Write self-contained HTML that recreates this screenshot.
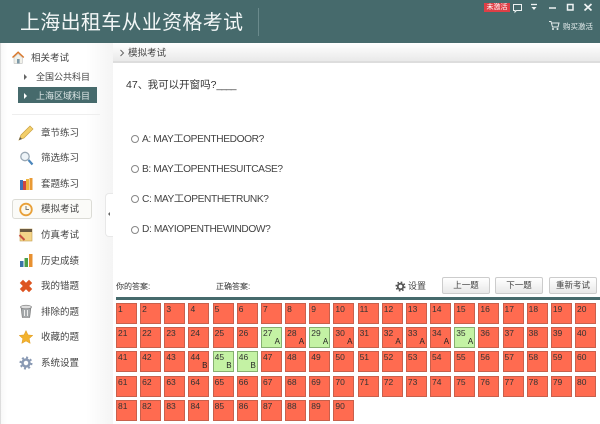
<!DOCTYPE html>
<html lang="zh"><head><meta charset="utf-8"><style>
*{box-sizing:border-box}
html,body{margin:0;padding:0;background:#fff}
body{width:600px;height:424px;overflow:hidden;position:relative;font-family:"Liberation Sans","Noto Sans CJK SC",sans-serif;color:#333}
#w{position:absolute;left:0;top:0;width:600px;height:424px;overflow:hidden;filter:blur(.3px)}
.a{position:absolute;white-space:nowrap}
#hd{left:0;top:0;width:600px;height:43px;background:#466a6c}
#title{left:20px;top:10px;font-size:20px;line-height:27px;color:#f2f6f6;letter-spacing:.3px}
#side{left:0;top:43px;width:113px;height:381px;background:linear-gradient(90deg,#f8f8f8 0,#fff 6px,#fff 85px,#f4f4f4 113px);border-left:1px solid #ddd}
#bar{left:113px;top:43px;width:487px;height:20px;background:linear-gradient(#fff,#e9e9e9);border-bottom:2px solid #ddd}
.m{left:41px;font-size:9.5px;line-height:14px;color:#444}
.ic{position:absolute;left:16px;width:20px;height:20px}
.op{left:142px;font-size:10.2px;letter-spacing:-.4px;line-height:14px;color:#444}
.r{position:absolute;left:131px;width:8px;height:8px;border:1px solid #888;border-radius:50%;background:#fff}
.btn{position:absolute;top:277px;height:17px;border:1px solid #ccc;border-radius:2px;background:linear-gradient(#fff,#e8e8e8);font-size:8.5px;line-height:15px;text-align:center;color:#444}
#grid{position:absolute;left:116px;top:303px;display:grid;grid-template-columns:repeat(20,21px);grid-auto-rows:21px;column-gap:3.16px;row-gap:3.2px}
#grid div{position:relative;background:#ff6b50;border:1px solid #c8604c;font-size:8.5px;line-height:11px;padding:0 0 0 1px;color:#333}
#grid div.g{background:#c4f2a4;border-color:#86b070}
#grid b{position:absolute;right:1px;bottom:1px;font-weight:400;font-size:8px;line-height:9px;color:#222}
</style></head><body><div id="w">
<div class="a" id="hd"></div>
<div class="a" id="title">上海出租车从业资格考试</div>
<div class="a" style="left:258px;top:8px;width:1px;height:28px;background:#6a8a8c"></div>
<div class="a" style="left:484px;top:3px;width:26px;height:9px;background:#de3f46;color:#fff;font-size:7px;line-height:9px;text-align:center">未激活</div>
<svg class="a" style="left:510px;top:0;width:90px;height:34px" viewBox="0 0 90 34" fill="none" stroke="#eef3f3">
<path d="M3.500 4.500h8v6h-5l-1.500 1.500v-1.500h-1.500z"/>
<path d="M21 4.500h6" stroke-width="1.300"/><path d="M21.500 7h5l-2.500 3z" fill="#eef3f3" stroke="none"/>
<path d="M39 8h7" stroke-width="1.500"/>
<rect x="57.500" y="4.500" width="5.500" height="5.500" stroke-width="1.500"/>
<path d="M74.500 4l7 6.500M81.500 4l-7 6.500" stroke-width="1.700"/>
<path d="M39 21.500h2l1.500 5.500h5.500l1-4h-7" stroke="#e6eeee"/><circle cx="43" cy="29" r="1" fill="#e6eeee" stroke="none"/><circle cx="47.500" cy="29" r="1" fill="#e6eeee" stroke="none"/>
</svg>
<div class="a" style="left:563px;top:21px;font-size:7.500px;line-height:11px;color:#e6eeee">购买激活</div>

<div class="a" id="side"></div>
<svg class="a" style="left:11px;top:50px;width:15px;height:15px" viewBox="0 0 20 20"><path d="M2 10L9.500 3l7.500 7" fill="none" stroke="#d9772a" stroke-width="2"/><path d="M4 10l5.500-5 5.500 5v8H4z" fill="#f1f1ea" stroke="#aaa" stroke-width=".6"/><rect x="8" y="12" width="3.500" height="6" fill="#7d99a8"/></svg>
<div class="a" style="left:31px;top:52px;font-size:9.500px;line-height:14px;color:#444">相关考试</div>
<div class="a" style="left:24px;top:74px;width:0;height:0;border-left:3px solid #666;border-top:3px solid transparent;border-bottom:3px solid transparent"></div>
<div class="a" style="left:36px;top:71px;font-size:9px;line-height:13px;color:#444">全国公共科目</div>
<div class="a" style="left:18px;top:87px;width:79px;height:16px;background:#466a6c"></div>
<div class="a" style="left:24px;top:93px;width:0;height:0;border-left:3px solid #fff;border-top:3px solid transparent;border-bottom:3px solid transparent"></div>
<div class="a" style="left:36px;top:90px;font-size:9px;line-height:13px;color:#dfe8e8">上海区域科目</div>
<div class="a" style="left:12px;top:114px;width:88px;height:1px;background:#eee"></div>

<div class="a" style="left:12px;top:199px;width:80px;height:20px;border:1px solid #dcdcd6;border-radius:3px;background:#fbfbf8"></div>

<svg class="ic" style="top:123px" viewBox="0 0 20 20"><path d="M3 17l2-5L14 3l3 3-9 9z" fill="#f3cf6a" stroke="#c9a040" stroke-width=".7"/><path d="M3 17l1-3 2 2z" fill="#555"/></svg>
<div class="a m" style="top:127px">章节练习</div>
<svg class="ic" style="top:148px" viewBox="0 0 20 20"><circle cx="9" cy="8.500" r="4.200" fill="#eef4f8" stroke="#9aa8b4" stroke-width="1.300"/><path d="M12.500 12l4 4.500" stroke="#4b86bb" stroke-width="2.200"/></svg>
<div class="a m" style="top:152px">筛选练习</div>
<svg class="ic" style="top:173px" viewBox="0 0 20 20"><rect x="4" y="7" width="3" height="10" fill="#3f72b8"/><rect x="7" y="8" width="3" height="9" fill="#d0483f"/><rect x="10" y="6" width="3" height="11" fill="#eeb63e"/><rect x="13.500" y="5" width="3" height="12" fill="#e99a35"/></svg>
<div class="a m" style="top:178px">套题练习</div>
<svg class="ic" style="top:199px" viewBox="0 0 20 20"><circle cx="10" cy="10.500" r="5.800" fill="#fdf8ea" stroke="#e8a038" stroke-width="1.800"/><path d="M10 7v3.500h3" fill="none" stroke="#777" stroke-width="1"/></svg>
<div class="a m" style="top:203px">模拟考试</div>
<svg class="ic" style="top:225px" viewBox="0 0 20 20"><rect x="4" y="4" width="12" height="12" fill="#f4d488" stroke="#c4a050" stroke-width=".6"/><rect x="4" y="4" width="12" height="3" fill="#6b5a40"/><path d="M3.500 10l5 5" stroke="#c9503f" stroke-width="2"/></svg>
<div class="a m" style="top:229px">仿真考试</div>
<svg class="ic" style="top:250px" viewBox="0 0 20 20"><rect x="4" y="11" width="3.500" height="6" fill="#3a74a8"/><rect x="8.500" y="8" width="3.500" height="9" fill="#4aa04a"/><rect x="13" y="4" width="3.500" height="13" fill="#e89030"/></svg>
<div class="a m" style="top:255px">历史成绩</div>
<svg class="ic" style="top:276px" viewBox="0 0 20 20"><path d="M4.500 7l2.500-2.500 3 3 3-3 2.500 2.500-3 3 3 3-2.500 2.500-3-3-3 3-2.500-2.500 3-3z" fill="#dd5420" stroke="#dd5420" stroke-width="1"/></svg>
<div class="a m" style="top:280px">我的错题</div>
<svg class="ic" style="top:301px" viewBox="0 0 20 20"><path d="M5 6h10l-1.300 10.500h-7.400z" fill="#a4a8aa" stroke="#777" stroke-width=".6"/><ellipse cx="10" cy="6" rx="5.500" ry="1.800" fill="#ddd" stroke="#777" stroke-width=".6"/><path d="M8.500 9v6M11.500 9v6" stroke="#eee"/></svg>
<div class="a m" style="top:306px">排除的题</div>
<svg class="ic" style="top:327px" viewBox="0 0 20 20"><path d="M10 3.500l2 4.400 4.800.5-3.600 3.200 1 4.800-4.200-2.400-4.200 2.400 1-4.800-3.600-3.200 4.800-.5z" fill="#f2b22e" stroke="#e09a20" stroke-width=".5"/></svg>
<div class="a m" style="top:331px">收藏的题</div>
<svg class="ic" style="top:353px" viewBox="0 0 20 20"><circle cx="10" cy="10" r="3.500" fill="none" stroke="#8a9ab4" stroke-width="2.500"/><circle cx="10" cy="10" r="5.500" fill="none" stroke="#8a9ab4" stroke-width="2" stroke-dasharray="2 2.300"/></svg>
<div class="a m" style="top:357px">系统设置</div>

<div class="a" style="left:105px;top:193px;width:8px;height:44px;background:#fff;border:1px solid #e8e8e8;border-right:none;border-radius:4px 0 0 4px"></div>
<div class="a" style="left:108px;top:212px;width:0;height:0;border-right:2.500px solid #666;border-top:2.500px solid transparent;border-bottom:2.500px solid transparent"></div>

<div class="a" id="bar"></div>
<svg class="a" style="left:119px;top:49px;width:6px;height:8px" viewBox="0 0 6 8"><path d="M1.500 1l3 3-3 3" fill="none" stroke="#666"/></svg>
<div class="a" style="left:128px;top:47px;font-size:9.500px;line-height:13px;color:#444">模拟考试</div>

<div class="a" style="left:126px;top:77px;font-size:10.500px;line-height:16px;color:#333">47<span style="letter-spacing:-.6px">、</span>我可以开窗吗?<span style="letter-spacing:-1.100px">____</span></div>
<div class="r" style="top:135px"></div><div class="a op" style="top:133px">A: MAY工OPENTHEDOOR?</div>
<div class="r" style="top:165px"></div><div class="a op" style="top:163px">B: MAY工OPENTHESUITCASE?</div>
<div class="r" style="top:195px"></div><div class="a op" style="top:193px">C: MAY工OPENTHETRUNK?</div>
<div class="r" style="top:226px"></div><div class="a op" style="top:223px">D: MAYIOPENTHEWINDOW?</div>

<div class="a" style="left:116px;top:281px;font-size:8px;line-height:12px;color:#333">你的答案:</div>
<div class="a" style="left:216px;top:281px;font-size:8px;line-height:12px;color:#333">正确答案:</div>
<svg class="a" style="left:395px;top:281px;width:11px;height:11px" viewBox="0 0 12 12"><circle cx="6" cy="6" r="3" fill="none" stroke="#555" stroke-width="2"/><circle cx="6" cy="6" r="4.700" fill="none" stroke="#555" stroke-width="1.600" stroke-dasharray="1.800 1.900"/></svg>
<div class="a" style="left:408px;top:280px;font-size:9px;line-height:13px;color:#444">设置</div>
<div class="btn" style="left:442px;width:48px">上一题</div>
<div class="btn" style="left:495px;width:48px">下一题</div>
<div class="btn" style="left:549px;width:48px">重新考试</div>
<div class="a" style="left:116px;top:297px;width:484px;height:3px;background:#466a6c"></div>

<div id="grid">
<div>1</div><div>2</div><div>3</div><div>4</div><div>5</div><div>6</div><div>7</div><div>8</div><div>9</div><div>10</div><div>11</div><div>12</div><div>13</div><div>14</div><div>15</div><div>16</div><div>17</div><div>18</div><div>19</div><div>20</div>
<div>21</div><div>22</div><div>23</div><div>24</div><div>25</div><div>26</div><div class="g">27<b>A</b></div><div>28<b>A</b></div><div class="g">29<b>A</b></div><div>30<b>A</b></div><div>31</div><div>32<b>A</b></div><div>33<b>A</b></div><div>34<b>A</b></div><div class="g">35<b>A</b></div><div>36</div><div>37</div><div>38</div><div>39</div><div>40</div>
<div>41</div><div>42</div><div>43</div><div>44<b>B</b></div><div class="g">45<b>B</b></div><div class="g">46<b>B</b></div><div>47</div><div>48</div><div>49</div><div>50</div><div>51</div><div>52</div><div>53</div><div>54</div><div>55</div><div>56</div><div>57</div><div>58</div><div>59</div><div>60</div>
<div>61</div><div>62</div><div>63</div><div>64</div><div>65</div><div>66</div><div>67</div><div>68</div><div>69</div><div>70</div><div>71</div><div>72</div><div>73</div><div>74</div><div>75</div><div>76</div><div>77</div><div>78</div><div>79</div><div>80</div>
<div>81</div><div>82</div><div>83</div><div>84</div><div>85</div><div>86</div><div>87</div><div>88</div><div>89</div><div>90</div>
</div>
</div></body></html>
